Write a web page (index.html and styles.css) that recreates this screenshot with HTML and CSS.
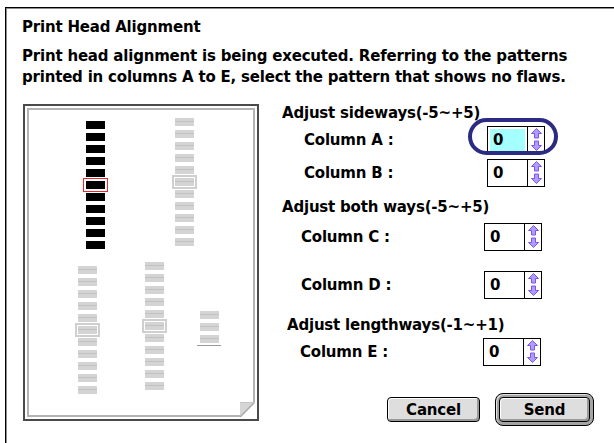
FILE: index.html
```html
<!DOCTYPE html>
<html lang="en">
<head>
<meta charset="utf-8">
<title>Print Head Alignment</title>
<link rel="stylesheet" href="styles.css">
</head>
<body>
<div class="window">
  <div class="title">Print Head Alignment</div>
  <p class="msg">Print head alignment is being executed. Referring to the patterns<br>printed in columns A to E, select the pattern that shows no flaws.</p>
  <div class="content">
    <div class="sheet">
      <div class="sheet-inner">
        <div class="col col-a">
          <i class="bar dark"></i><i class="bar dark"></i><i class="bar dark"></i><i class="bar dark"></i><i class="bar dark"></i><i class="bar dark sel-red"></i><i class="bar dark"></i><i class="bar dark"></i><i class="bar dark"></i><i class="bar dark"></i><i class="bar dark"></i>
        </div>
        <div class="col col-b">
          <i class="bar"></i><i class="bar"></i><i class="bar"></i><i class="bar"></i><i class="bar"></i><i class="bar sel"></i><i class="bar"></i><i class="bar"></i><i class="bar"></i><i class="bar"></i><i class="bar"></i>
        </div>
        <div class="col col-c">
          <i class="bar"></i><i class="bar"></i><i class="bar"></i><i class="bar"></i><i class="bar"></i><i class="bar sel"></i><i class="bar"></i><i class="bar"></i><i class="bar"></i><i class="bar"></i><i class="bar"></i>
        </div>
        <div class="col col-d">
          <i class="bar"></i><i class="bar"></i><i class="bar"></i><i class="bar"></i><i class="bar"></i><i class="bar sel"></i><i class="bar"></i><i class="bar"></i><i class="bar"></i><i class="bar"></i><i class="bar"></i>
        </div>
        <div class="col col-e">
          <i class="bar"></i><i class="bar"></i><i class="bar"></i><i class="rule"></i>
        </div>
        <svg class="fold" width="15" height="15" viewBox="0 0 15 15">
          <rect x="0" y="0" width="15" height="15" fill="#fff"/>
          <polygon points="0,0 15,0 0,15" fill="#d6d6d6"/>
          <line x1="0" y1="15" x2="15" y2="0" stroke="#a8a8a8" stroke-width="1.5"/>
          <line x1="0" y1="0.5" x2="15" y2="0.5" stroke="#c4c4c4" stroke-width="1"/>
        </svg>
      </div>
    </div>

    <div class="controls">
      <div class="heading">Adjust sideways(-5~+5)</div>
      <div class="row pad-ab">
        <span class="label">Column A :</span>
        <div class="spin">
          <div class="field"><span class="val active">0</span></div>
          <div class="arrows">
            <svg width="11" height="24" viewBox="0 0 11 24"><polygon points="5.5,0.5 10.5,5.5 7.5,5.5 7.5,10 3.5,10 3.5,5.5 0.5,5.5" fill="#b09cff" stroke="#7d55ea" stroke-width="1"/><polygon points="3.5,13 7.5,13 7.5,17.5 10.5,17.5 5.5,22.5 0.5,17.5 3.5,17.5" fill="#b09cff" stroke="#7d55ea" stroke-width="1"/></svg>
          </div>
          <span class="ring"></span>
        </div>
      </div>
      <div class="row pad-ab">
        <span class="label">Column B :</span>
        <div class="spin">
          <div class="field"><span class="val">0</span></div>
          <div class="arrows">
            <svg width="11" height="24" viewBox="0 0 11 24"><polygon points="5.5,0.5 10.5,5.5 7.5,5.5 7.5,10 3.5,10 3.5,5.5 0.5,5.5" fill="#b09cff" stroke="#7d55ea" stroke-width="1"/><polygon points="3.5,13 7.5,13 7.5,17.5 10.5,17.5 5.5,22.5 0.5,17.5 3.5,17.5" fill="#b09cff" stroke="#7d55ea" stroke-width="1"/></svg>
          </div>
        </div>
      </div>

      <div class="heading h2">Adjust both ways(-5~+5)</div>
      <div class="row pad-cd row-c">
        <span class="label">Column C :</span>
        <div class="spin">
          <div class="field"><span class="val">0</span></div>
          <div class="arrows">
            <svg width="11" height="24" viewBox="0 0 11 24"><polygon points="5.5,0.5 10.5,5.5 7.5,5.5 7.5,10 3.5,10 3.5,5.5 0.5,5.5" fill="#b09cff" stroke="#7d55ea" stroke-width="1"/><polygon points="3.5,13 7.5,13 7.5,17.5 10.5,17.5 5.5,22.5 0.5,17.5 3.5,17.5" fill="#b09cff" stroke="#7d55ea" stroke-width="1"/></svg>
          </div>
        </div>
      </div>
      <div class="row pad-cd row-d">
        <span class="label">Column D :</span>
        <div class="spin">
          <div class="field"><span class="val">0</span></div>
          <div class="arrows">
            <svg width="11" height="24" viewBox="0 0 11 24"><polygon points="5.5,0.5 10.5,5.5 7.5,5.5 7.5,10 3.5,10 3.5,5.5 0.5,5.5" fill="#b09cff" stroke="#7d55ea" stroke-width="1"/><polygon points="3.5,13 7.5,13 7.5,17.5 10.5,17.5 5.5,22.5 0.5,17.5 3.5,17.5" fill="#b09cff" stroke="#7d55ea" stroke-width="1"/></svg>
          </div>
        </div>
      </div>

      <div class="heading h3">Adjust lengthways(-1~+1)</div>
      <div class="row pad-e">
        <span class="label">Column E :</span>
        <div class="spin">
          <div class="field"><span class="val">0</span></div>
          <div class="arrows">
            <svg width="11" height="24" viewBox="0 0 11 24"><polygon points="5.5,0.5 10.5,5.5 7.5,5.5 7.5,10 3.5,10 3.5,5.5 0.5,5.5" fill="#b09cff" stroke="#7d55ea" stroke-width="1"/><polygon points="3.5,13 7.5,13 7.5,17.5 10.5,17.5 5.5,22.5 0.5,17.5 3.5,17.5" fill="#b09cff" stroke="#7d55ea" stroke-width="1"/></svg>
          </div>
        </div>
      </div>

      <div class="buttons">
        <button class="btn" type="button">Cancel</button>
        <div class="default-ring"><button class="btn btn-send" type="button">Send</button></div>
      </div>
    </div>
  </div>
</div>
</body>
</html>
```
FILE: styles.css
```css
* { box-sizing: border-box; }

html, body {
  margin: 0;
  padding: 0;
  background: #fff;
}

body {
  width: 614px;
  height: 443px;
  overflow: hidden;
  font-family: "DejaVu Sans", "Liberation Sans", sans-serif;
  font-weight: bold;
  font-size: 15px;
  letter-spacing: -0.2px;
  color: #000;
}

.window {
  margin: 7px 0 0 5px;
  height: 436px;
  border-top: 1px solid #000;
  border-left: 1px solid #000;
  box-shadow: inset 1px 1px 0 #8c8c8c;
  padding: 11px 0 0 16px;
}

.title {
  line-height: 16px;
}

.msg {
  margin: 11px 0 0;
  line-height: 21px;
}

.content {
  display: flex;
  align-items: flex-start;
  margin-top: 16px;
  margin-left: 1px;
}

/* printed sheet */
.sheet {
  flex: none;
  width: 236px;
  height: 317px;
  border: 2px solid #4a4a4a;
  padding: 2px;
  background: #fff;
}

.sheet-inner {
  position: relative;
  height: 100%;
  border: 2px solid #b3b3b3;
}

.col {
  position: absolute;
  display: flex;
  flex-direction: column;
  gap: 4px;
}

.col-a { left: 57px; top: 11px; }
.col-b { left: 146px; top: 8px; }
.col-c { left: 49px; top: 156px; }
.col-d { left: 116px; top: 152px; }
.col-e { left: 171px; top: 201px; }

.bar {
  display: block;
  width: 19px;
  height: 8px;
  background: linear-gradient(#d4d4d4 0 3px, #c2c2c2 3px 4px, #d4d4d4 4px);
}

.bar.dark {
  background: #000;
}

.bar.sel {
  box-shadow: 0 0 0 1px #fff, 0 0 0 3px #cfcfcf;
}

.bar.sel-red {
  box-shadow: 0 0 0 2px #fff, 0 0 0 3px #e8262b;
}

.rule {
  display: block;
  width: 24px;
  height: 1px;
  margin: -2px 0 0 -3px;
  background: #9a9a9a;
}

.fold {
  position: absolute;
  right: -2px;
  bottom: -2px;
}

/* controls */
.controls {
  flex: 1;
  display: flex;
  flex-direction: column;
  margin: 1px 0 0 23px;
}

.heading {
  line-height: 16px;
}

.heading.h2 { margin-top: 12px; }
.heading.h3 { margin-top: 18px; padding-left: 5px; }

.row {
  display: flex;
  align-items: center;
  height: 28px;
  margin-top: 5px;
}

.row-c { margin-top: 8px; }
.row-d { margin-top: 20px; }

.pad-ab { padding-left: 22px; }
.pad-cd { padding-left: 19px; }
.pad-e { padding-left: 18px; }

.label {
  width: 183px;
  line-height: 16px;
}

.spin {
  position: relative;
  display: flex;
  width: 58px;
  height: 28px;
  border: 1px solid #000;
  background: #fff;
}

.field {
  width: 40px;
  padding: 2px;
  border-right: 1px solid #000;
}

.val {
  display: block;
  height: 100%;
  padding-left: 3px;
  line-height: 22px;
}

.val.active {
  background: #a6ffff;
}

.arrows {
  flex: 1;
  display: flex;
  align-items: center;
  justify-content: center;
}

.arrows svg { display: block; }

.ring {
  position: absolute;
  left: -20px;
  top: -9px;
  width: 90px;
  height: 37px;
  border: 4px solid #2c2b84;
  border-radius: 19px;
  pointer-events: none;
}

/* buttons */
.buttons {
  display: flex;
  align-items: center;
  gap: 15px;
  margin-top: 27px;
  padding-left: 105px;
}

.btn {
  width: 93px;
  height: 25px;
  padding: 0;
  border: 1px solid #000;
  border-radius: 4px;
  background: #dedede;
  box-shadow: inset 1px 1px 0 #fff, inset -2px -2px 0 #9a9a9a;
  font: inherit;
  letter-spacing: inherit;
  color: #000;
}

.default-ring {
  padding: 3px;
  border: 1px solid #000;
  border-radius: 8px;
  background: #a4a4a4;
  box-shadow: inset 1px 1px 0 #e0e0e0;
}

.btn-send {
  display: block;
  width: 91px;
}
```
